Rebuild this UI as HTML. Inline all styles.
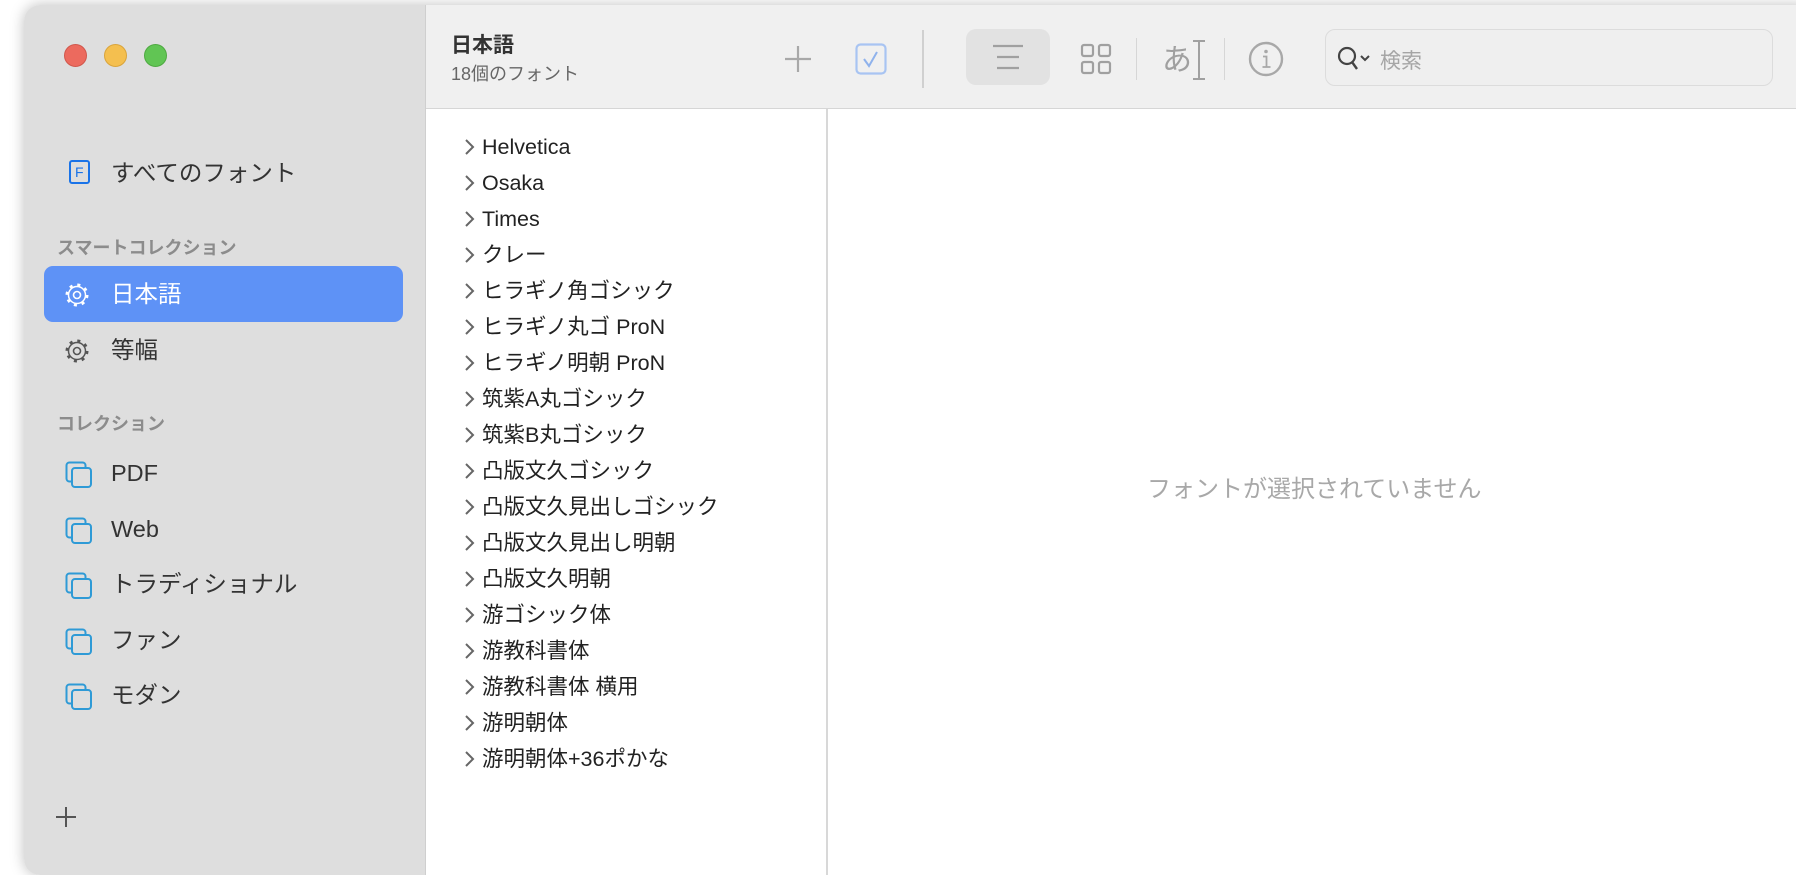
<!DOCTYPE html>
<html><head><meta charset="utf-8"><style>
*{margin:0;padding:0;box-sizing:border-box}
body{width:1796px;height:864px;background:#fff;overflow:hidden;position:relative;font-family:"Liberation Sans","Noto Sans CJK JP",sans-serif;color:#2a2a2a}
.win{position:absolute;left:24px;top:5px;width:1790px;height:870px;border-radius:16px;overflow:hidden;box-shadow:0 0 14px rgba(0,0,0,.25);background:#fff}
.side{position:absolute;left:0;top:0;width:402px;height:100%;background:#dedede;border-right:1px solid #cfcfcf}
.tb{position:absolute;left:402px;top:0;right:0;height:104px;background:#f0f0f0;border-bottom:1px solid #d6d6d6}
.dot{position:absolute;top:39px;width:23px;height:23px;border-radius:50%}
.a{position:absolute;white-space:nowrap}
.si{font-size:23.5px;color:#333;line-height:30px}
.hd{font-size:18px;color:#8c8c8c;font-weight:bold}
.li{position:absolute;left:482px;font-size:21.5px;color:#222;white-space:nowrap;line-height:30px;height:30px}
.li svg{position:absolute;left:-18px;top:6px}
</style></head><body>
<div class="win">
<div class="side">
<div class="dot" style="left:40px;background:#ec6a5e;border:1px solid #d0574c"></div>
<div class="dot" style="left:80px;background:#f4bf4f;border:1px solid #d9a43b"></div>
<div class="dot" style="left:120px;background:#61c554;border:1px solid #4ea941"></div>
<svg class="a" style="left:45px;top:155px" width="22" height="24"><rect x="1" y="1" width="19" height="22" rx="2" fill="none" stroke="#1a73e8" stroke-width="2"/><text x="6" y="17" font-size="14" font-family="Liberation Sans" fill="#1a73e8">F</text></svg>
<div class="a si" style="left:87px;top:153px">すべてのフォント</div>
<div class="a hd" style="left:33px;top:229px">スマートコレクション</div>
<div class="a" style="left:20px;top:261px;width:359px;height:56px;background:#5e92f6;border-radius:9px"></div>
<svg class="a" style="left:40px;top:277px" width="26" height="26" viewBox="0 0 26 26"><circle cx="13" cy="13" r="3.5" fill="none" stroke="#fff" stroke-width="1.6"/><circle cx="13" cy="13" r="8.5" fill="none" stroke="#fff" stroke-width="1.5"/><circle cx="13" cy="13" r="10" fill="none" stroke="#fff" stroke-width="3" stroke-dasharray="3 4.85"/></svg>
<div class="a si" style="left:87px;top:274px;color:#fff">日本語</div>
<svg class="a" style="left:40px;top:333px" width="26" height="26" viewBox="0 0 26 26"><circle cx="13" cy="13" r="3.5" fill="none" stroke="#555" stroke-width="1.6"/><circle cx="13" cy="13" r="8.5" fill="none" stroke="#555" stroke-width="1.5"/><circle cx="13" cy="13" r="10" fill="none" stroke="#555" stroke-width="3" stroke-dasharray="3 4.85"/></svg>
<div class="a si" style="left:87px;top:330px">等幅</div>
<div class="a hd" style="left:33px;top:405px">コレクション</div>
<div style="position:absolute;left:6px;top:456px">
<div style="position:absolute;top:0"><svg class="a" style="left:35px;top:0" width="28" height="28"><rect x="1.5" y="1.5" width="19" height="19" rx="3" fill="#dedede" stroke="#2e9ad6" stroke-width="2"/><rect x="7" y="7" width="19" height="19" rx="3" fill="#dedede" stroke="#2e9ad6" stroke-width="2"/></svg><div class="a si" style="left:81px;top:-3px">PDF</div></div>
<div style="position:absolute;top:56px"><svg class="a" style="left:35px;top:0" width="28" height="28"><rect x="1.5" y="1.5" width="19" height="19" rx="3" fill="#dedede" stroke="#2e9ad6" stroke-width="2"/><rect x="7" y="7" width="19" height="19" rx="3" fill="#dedede" stroke="#2e9ad6" stroke-width="2"/></svg><div class="a si" style="left:81px;top:-3px">Web</div></div>
<div style="position:absolute;top:111px"><svg class="a" style="left:35px;top:0" width="28" height="28"><rect x="1.5" y="1.5" width="19" height="19" rx="3" fill="#dedede" stroke="#2e9ad6" stroke-width="2"/><rect x="7" y="7" width="19" height="19" rx="3" fill="#dedede" stroke="#2e9ad6" stroke-width="2"/></svg><div class="a si" style="left:81px;top:-3px">トラディショナル</div></div>
<div style="position:absolute;top:167px"><svg class="a" style="left:35px;top:0" width="28" height="28"><rect x="1.5" y="1.5" width="19" height="19" rx="3" fill="#dedede" stroke="#2e9ad6" stroke-width="2"/><rect x="7" y="7" width="19" height="19" rx="3" fill="#dedede" stroke="#2e9ad6" stroke-width="2"/></svg><div class="a si" style="left:81px;top:-3px">ファン</div></div>
<div style="position:absolute;top:222px"><svg class="a" style="left:35px;top:0" width="28" height="28"><rect x="1.5" y="1.5" width="19" height="19" rx="3" fill="#dedede" stroke="#2e9ad6" stroke-width="2"/><rect x="7" y="7" width="19" height="19" rx="3" fill="#dedede" stroke="#2e9ad6" stroke-width="2"/></svg><div class="a si" style="left:81px;top:-3px">モダン</div></div>
</div>
<svg class="a" style="left:30px;top:800px" width="24" height="24"><path d="M12 2v20M2 12h20" stroke="#555" stroke-width="2"/></svg>
</div>
<div class="tb">
<div class="a" style="left:25px;top:24px;font-size:21px;font-weight:bold;color:#333">日本語</div>
<div class="a" style="left:25px;top:55px;font-size:18px;color:#666">18個のフォント</div>
<svg class="a" style="left:357px;top:39px" width="30" height="30"><path d="M15 2v26M2 15h26" stroke="#a8a8a8" stroke-width="2.2"/></svg>
<svg class="a" style="left:429px;top:38px" width="32" height="32"><rect x="1.5" y="1.5" width="29" height="29" rx="4" fill="none" stroke="#a8c4f2" stroke-width="2.2"/><path d="M9 16l5 7 8-14" fill="none" stroke="#8fb2ec" stroke-width="2"/></svg>
<div class="a" style="left:496px;top:25px;width:2px;height:58px;background:#d0d0d0"></div>
<div class="a" style="left:540px;top:24px;width:84px;height:56px;border-radius:10px;background:#e2e2e2"></div>
<svg class="a" style="left:566px;top:38px" width="32" height="28"><path d="M1 3h30M5 14h22M5 25h22" stroke="#a0a0a0" stroke-width="2.2"/></svg>
<svg class="a" style="left:654px;top:38px" width="32" height="32"><g fill="none" stroke="#a0a0a0" stroke-width="2.2"><rect x="2" y="2" width="11" height="11" rx="2"/><rect x="19" y="2" width="11" height="11" rx="2"/><rect x="2" y="19" width="11" height="11" rx="2"/><rect x="19" y="19" width="11" height="11" rx="2"/></g></svg>
<div class="a" style="left:710px;top:33px;width:1px;height:42px;background:#d6d6d6"></div>
<div class="a" style="left:736px;top:30px;font-size:30px;color:#a0a0a0">あ</div>
<svg class="a" style="left:765px;top:34px" width="16" height="42"><path d="M2 2h12M8 2v38M2 40h12" stroke="#a0a0a0" stroke-width="2"/></svg>
<div class="a" style="left:798px;top:33px;width:1px;height:42px;background:#d6d6d6"></div>
<svg class="a" style="left:822px;top:36px" width="36" height="36"><circle cx="18" cy="18" r="16" fill="none" stroke="#a8a8a8" stroke-width="2.4"/><circle cx="18" cy="10.5" r="1.8" fill="#a8a8a8"/><path d="M15 15.5h3.5v10M14.5 26h8" fill="none" stroke="#a8a8a8" stroke-width="1.8"/></svg>
<div class="a" style="left:899px;top:24px;width:448px;height:57px;border:1.5px solid #dcdcdc;border-radius:10px;background:#efefef"></div>
<svg class="a" style="left:910px;top:38px" width="40" height="34"><circle cx="11" cy="13" r="8" fill="none" stroke="#444" stroke-width="2.2"/><path d="M16 19l5 7" stroke="#444" stroke-width="2.4"/><path d="M25 13l4 4 4-4" fill="none" stroke="#444" stroke-width="2"/></svg>
<div class="a" style="left:954px;top:40px;font-size:21px;color:#a5a5a5">検索</div>
</div>
<div class="a" style="left:802px;top:104px;width:1.5px;height:770px;background:#d8d8d8"></div>
<div class="a" style="left:1123px;top:464px;font-size:24px;color:#a8a8a8">フォントが選択されていません</div>
</div>
<div class="li" style="top:132px"><svg width="12" height="18"><path d="M2 2l7 7-7 7" fill="none" stroke="#666" stroke-width="2"/></svg>Helvetica</div>
<div class="li" style="top:168px"><svg width="12" height="18"><path d="M2 2l7 7-7 7" fill="none" stroke="#666" stroke-width="2"/></svg>Osaka</div>
<div class="li" style="top:204px"><svg width="12" height="18"><path d="M2 2l7 7-7 7" fill="none" stroke="#666" stroke-width="2"/></svg>Times</div>
<div class="li" style="top:240px"><svg width="12" height="18"><path d="M2 2l7 7-7 7" fill="none" stroke="#666" stroke-width="2"/></svg>クレー</div>
<div class="li" style="top:276px"><svg width="12" height="18"><path d="M2 2l7 7-7 7" fill="none" stroke="#666" stroke-width="2"/></svg>ヒラギノ角ゴシック</div>
<div class="li" style="top:312px"><svg width="12" height="18"><path d="M2 2l7 7-7 7" fill="none" stroke="#666" stroke-width="2"/></svg>ヒラギノ丸ゴ ProN</div>
<div class="li" style="top:348px"><svg width="12" height="18"><path d="M2 2l7 7-7 7" fill="none" stroke="#666" stroke-width="2"/></svg>ヒラギノ明朝 ProN</div>
<div class="li" style="top:384px"><svg width="12" height="18"><path d="M2 2l7 7-7 7" fill="none" stroke="#666" stroke-width="2"/></svg>筑紫A丸ゴシック</div>
<div class="li" style="top:420px"><svg width="12" height="18"><path d="M2 2l7 7-7 7" fill="none" stroke="#666" stroke-width="2"/></svg>筑紫B丸ゴシック</div>
<div class="li" style="top:456px"><svg width="12" height="18"><path d="M2 2l7 7-7 7" fill="none" stroke="#666" stroke-width="2"/></svg>凸版文久ゴシック</div>
<div class="li" style="top:492px"><svg width="12" height="18"><path d="M2 2l7 7-7 7" fill="none" stroke="#666" stroke-width="2"/></svg>凸版文久見出しゴシック</div>
<div class="li" style="top:528px"><svg width="12" height="18"><path d="M2 2l7 7-7 7" fill="none" stroke="#666" stroke-width="2"/></svg>凸版文久見出し明朝</div>
<div class="li" style="top:564px"><svg width="12" height="18"><path d="M2 2l7 7-7 7" fill="none" stroke="#666" stroke-width="2"/></svg>凸版文久明朝</div>
<div class="li" style="top:600px"><svg width="12" height="18"><path d="M2 2l7 7-7 7" fill="none" stroke="#666" stroke-width="2"/></svg>游ゴシック体</div>
<div class="li" style="top:636px"><svg width="12" height="18"><path d="M2 2l7 7-7 7" fill="none" stroke="#666" stroke-width="2"/></svg>游教科書体</div>
<div class="li" style="top:672px"><svg width="12" height="18"><path d="M2 2l7 7-7 7" fill="none" stroke="#666" stroke-width="2"/></svg>游教科書体 横用</div>
<div class="li" style="top:708px"><svg width="12" height="18"><path d="M2 2l7 7-7 7" fill="none" stroke="#666" stroke-width="2"/></svg>游明朝体</div>
<div class="li" style="top:744px"><svg width="12" height="18"><path d="M2 2l7 7-7 7" fill="none" stroke="#666" stroke-width="2"/></svg>游明朝体+36ポかな</div>
</body></html>
